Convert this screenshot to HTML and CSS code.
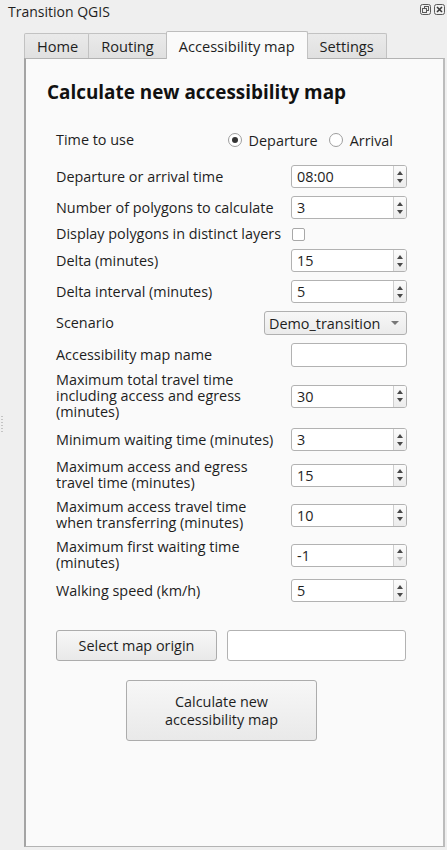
FILE: index.html
```html
<!DOCTYPE html>
<html>
<head>
<meta charset="utf-8">
<link rel="stylesheet" href="styles.css">
</head>
<body>
<div class="window">
  <span class="grip"></span>
  <header class="titlebar">
    <span class="wtitle">Transition QGIS</span>
    <div class="wbtns">
      <svg width="11" height="11" viewBox="0 0 11 11"><rect x="0.5" y="0.5" width="10" height="10" rx="2" fill="none" stroke="#5a5a5a"/><rect x="4.5" y="2.5" width="4" height="4" fill="none" stroke="#5a5a5a"/><rect x="2.5" y="4.5" width="4" height="4" fill="#efefef" stroke="#5a5a5a"/></svg>
      <svg width="11" height="11" viewBox="0 0 11 11"><rect x="0.5" y="0.5" width="10" height="10" rx="2" fill="none" stroke="#5a5a5a"/><path d="M3 3L8 8M8 3L3 8" stroke="#3a3a3a" stroke-width="1.6"/></svg>
    </div>
  </header>
  <nav class="tabs">
    <div class="tab">Home</div>
    <div class="tab">Routing</div>
    <div class="tab active">Accessibility map</div>
    <div class="tab">Settings</div>
  </nav>
  <section class="pane">
    <h1>Calculate new accessibility map</h1>
    <div class="form">
      <div class="row time">
        <span class="label">Time to use</span>
        <div class="radios">
          <span class="radio checked"></span><span class="rlabel">Departure</span>
          <span class="radio"></span><span class="rlabel">Arrival</span>
        </div>
      </div>
      <div class="row">
        <span class="label">Departure or arrival time</span>
        <div class="spin"><span class="val">08:00</span><span class="btns"><i class="up"></i><i class="down"></i></span></div>
      </div>
      <div class="row">
        <span class="label">Number of polygons to calculate</span>
        <div class="spin"><span class="val">3</span><span class="btns"><i class="up"></i><i class="down"></i></span></div>
      </div>
      <div class="row check">
        <span class="label">Display polygons in distinct layers</span>
        <div class="field"><span class="checkbox"></span></div>
      </div>
      <div class="row">
        <span class="label">Delta (minutes)</span>
        <div class="spin"><span class="val">15</span><span class="btns"><i class="up"></i><i class="down"></i></span></div>
      </div>
      <div class="row">
        <span class="label">Delta interval (minutes)</span>
        <div class="spin"><span class="val">5</span><span class="btns"><i class="up"></i><i class="down"></i></span></div>
      </div>
      <div class="row tall">
        <span class="label">Scenario</span>
        <div class="combo"><span>Demo_transition</span><i class="caret"></i></div>
      </div>
      <div class="row tall">
        <span class="label">Accessibility map name</span>
        <div class="text-input"></div>
      </div>
      <div class="row tight">
        <span class="label">Maximum total travel time<br>including access and egress<br>(minutes)</span>
        <div class="spin"><span class="val">30</span><span class="btns"><i class="up"></i><i class="down"></i></span></div>
      </div>
      <div class="row">
        <span class="label">Minimum waiting time (minutes)</span>
        <div class="spin"><span class="val">3</span><span class="btns"><i class="up"></i><i class="down"></i></span></div>
      </div>
      <div class="row">
        <span class="label">Maximum access and egress<br>travel time (minutes)</span>
        <div class="spin"><span class="val">15</span><span class="btns"><i class="up"></i><i class="down"></i></span></div>
      </div>
      <div class="row">
        <span class="label">Maximum access travel time<br>when transferring (minutes)</span>
        <div class="spin"><span class="val">10</span><span class="btns"><i class="up"></i><i class="down"></i></span></div>
      </div>
      <div class="row">
        <span class="label">Maximum first waiting time<br>(minutes)</span>
        <div class="spin"><span class="val">-1</span><span class="btns"><i class="up"></i><i class="down disabled"></i></span></div>
      </div>
      <div class="row">
        <span class="label">Walking speed (km/h)</span>
        <div class="spin"><span class="val">5</span><span class="btns"><i class="up"></i><i class="down"></i></span></div>
      </div>
    </div>
    <div class="origin">
      <button class="btn origin-btn">Select map origin</button>
      <div class="text-input origin-input"></div>
    </div>
    <div class="calc-wrap">
      <button class="btn calc">Calculate new<br>accessibility map</button>
    </div>
  </section>
</div>
</body>
</html>
```

FILE: styles.css
```css
html, body {
  margin: 0;
  padding: 0;
  background: #efefef;
}
body {
  font-family: "Open Sans", "Noto Sans", sans-serif;
  font-size: 14.4px;
  color: #1e1e1e;
}
.window {
  position: relative;
  width: 447px;
  height: 850px;
  display: flex;
  flex-direction: column;
}
.grip {
  position: absolute;
  left: 1px;
  top: 416px;
  width: 2px;
  height: 18px;
  background: repeating-linear-gradient(#c4c4c4 0 1px, transparent 1px 3px);
}
.titlebar {
  height: 25px;
  display: flex;
  align-items: center;
  justify-content: space-between;
  padding: 0 2px 0 8px;
}
.wtitle {
  font-size: 14px;
  margin-top: -2px;
}
.wbtns {
  display: flex;
  gap: 3px;
  margin-top: -6px;
}
.tabs {
  display: flex;
  align-items: flex-end;
  height: 27px;
  padding-left: 24px;
  margin-top: 6px;
  position: relative;
  z-index: 1;
}
.tab {
  height: 25px;
  box-sizing: border-box;
  padding: 0 12px;
  display: flex;
  align-items: center;
  font-size: 14.6px;
  background: linear-gradient(#eaeaea, #e0e0e0);
  border: 1px solid #c2c2c2;
  border-bottom: none;
  border-radius: 2px 2px 0 0;
  margin-right: -1px;
}
.tab:first-child {
  padding: 0 11px 0 12px;
  margin-right: -2px;
}
.tab.active {
  height: 28px;
  margin-bottom: -1px;
  background: #fafafa;
  border-color: #bdbdbd;
  padding: 0 12px 0 12px;
  margin-left: 0;
  margin-right: -1px;
}
.pane {
  flex: 1;
  margin: 0 2px 3px 24px;
  background: #fafafa;
  border: 1px solid #b3b3b3;
  border-left: 2px solid #a4a4a4;
  border-right: 2px solid #bcbcbc;
  padding: 0 22px 0 21px;
  display: flex;
  flex-direction: column;
}
h1 {
  margin: 20px 0 0;
  font-size: 18.9px;
  line-height: 26px;
  font-weight: 700;
  color: #111;
}
.form {
  margin: 25px 14px 0 9px;
  display: flex;
  flex-direction: column;
  gap: 8px;
}
.row {
  display: flex;
  align-items: center;
  justify-content: space-between;
  height: 23px;
}
.label {
  line-height: 16px;
  white-space: nowrap;
}
.row.time {
  height: 20px;
  margin-bottom: 7px;
}
.row.check {
  height: 14px;
}
.row.tall {
  height: 24px;
}
.row.tight {
  height: 48px;
  margin-top: -3px;
}
.row:has(br) {
  height: auto;
}
.radios {
  display: flex;
  align-items: center;
  margin-right: 14px;
}
.radio {
  width: 12px;
  height: 12px;
  border: 1px solid #9e9e9e;
  border-radius: 50%;
  background: #fff;
  position: relative;
  margin-right: 7px;
}
.radio.checked::after {
  content: "";
  position: absolute;
  left: 3px;
  top: 3px;
  width: 6px;
  height: 6px;
  border-radius: 50%;
  background: #333;
}
.rlabel {
  margin-right: 11px;
}
.rlabel:last-child {
  margin-right: 0;
}
.field {
  width: 115px;
  display: flex;
}
.checkbox {
  width: 11px;
  height: 11px;
  border: 1px solid #a8a8a8;
  border-radius: 2px;
  background: #fff;
}
.spin {
  width: 116px;
  height: 23px;
  box-sizing: border-box;
  display: flex;
  border: 1px solid #b2b2b2;
  border-radius: 3px;
  background: #fff;
  overflow: hidden;
}
.spin .val {
  flex: 1;
  padding-left: 5px;
  line-height: 21px;
}
.spin .btns {
  width: 12px;
  border-left: 1px solid #cfcfcf;
  background: linear-gradient(#fbfbfb, #ececec);
  display: flex;
  flex-direction: column;
  align-items: center;
  justify-content: center;
  gap: 4px;
}
.up, .down {
  width: 0;
  height: 0;
  border-left: 3.5px solid transparent;
  border-right: 3.5px solid transparent;
}
.up {
  border-bottom: 4px solid #484848;
}
.down {
  border-top: 4px solid #484848;
}
.down.disabled {
  border-top-color: #b4b4b4;
}
.combo {
  width: 143px;
  height: 24px;
  box-sizing: border-box;
  border: 1px solid #b0b0b0;
  border-radius: 3px;
  background: linear-gradient(#f7f7f7, #ebebeb);
  display: flex;
  align-items: center;
  justify-content: space-between;
  padding: 0 7px 0 4px;
}
.caret {
  width: 0;
  height: 0;
  border-left: 4px solid transparent;
  border-right: 4px solid transparent;
  border-top: 4px solid #777;
}
.text-input {
  width: 116px;
  height: 24px;
  box-sizing: border-box;
  border: 1px solid #b2b2b2;
  border-radius: 3px;
  background: #fff;
}
.origin {
  display: flex;
  gap: 10px;
  margin: 28px 15px 0 9px;
  height: 31px;
}
.btn {
  font-family: inherit;
  font-size: 14.4px;
  color: #1e1e1e;
  border: 1px solid #acacac;
  border-radius: 3px;
  background: linear-gradient(#f7f7f7, #e9e9e9);
  padding: 0;
}
.origin-btn {
  width: 161px;
  height: 31px;
}
.origin-input {
  flex: 1;
  height: 31px;
}
.calc-wrap {
  display: flex;
  margin: 19px 0 0 79px;
}
.calc {
  width: 191px;
  height: 61px;
  line-height: 18px;
}
```
